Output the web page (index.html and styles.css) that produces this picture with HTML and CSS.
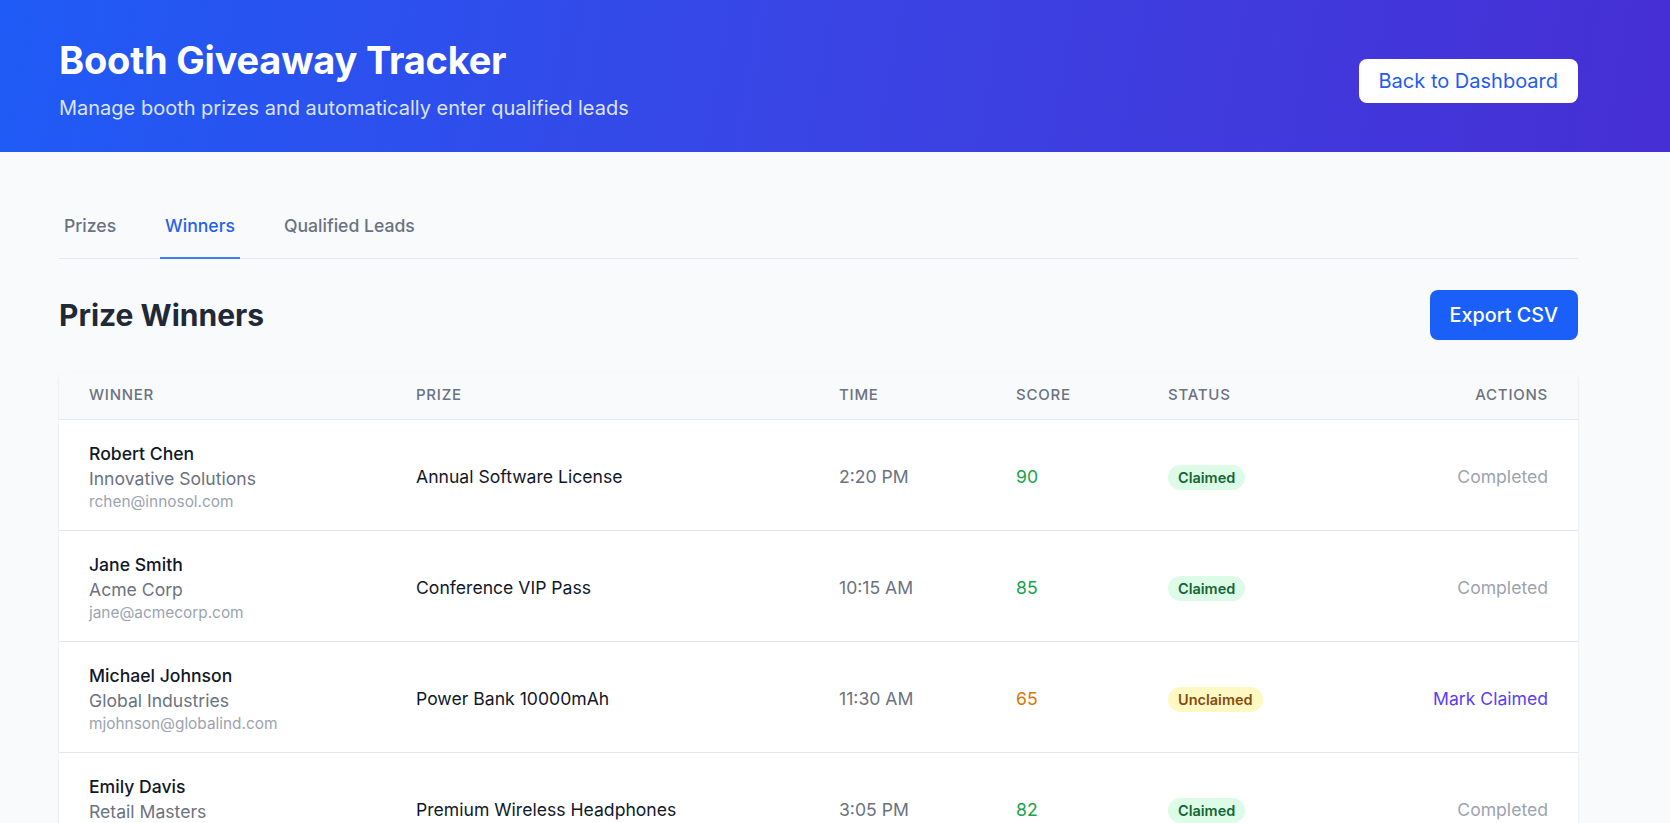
FILE: index.html
```html
<!DOCTYPE html>
<html lang="en">
<head>
<meta charset="utf-8">
<title>Booth Giveaway Tracker</title>
<link rel="stylesheet" href="styles.css">
</head>
<body>
<header class="hero">
  <div class="hero-text">
    <h1 class="hero-title">Booth Giveaway Tracker</h1>
    <p class="hero-sub">Manage booth prizes and automatically enter qualified leads</p>
  </div>
  <button class="btn-light">Back to Dashboard</button>
</header>
<main class="main">
  <nav class="tabs">
    <a class="tab">Prizes</a>
    <a class="tab active">Winners</a>
    <a class="tab">Qualified Leads</a>
  </nav>
  <div class="section-head">
    <h2 class="section-title">Prize Winners</h2>
    <button class="btn-primary">Export CSV</button>
  </div>
  <div class="card">
    <div class="grid head">
      <div class="cell">Winner</div>
      <div class="cell">Prize</div>
      <div class="cell">Time</div>
      <div class="cell">Score</div>
      <div class="cell">Status</div>
      <div class="cell right">Actions</div>
    </div>
    <div class="grid row">
      <div class="cell person"><span class="name">Robert Chen</span><span class="company">Innovative Solutions</span><span class="email">rchen@innosol.com</span></div>
      <div class="cell prize">Annual Software License</div>
      <div class="cell time">2:20 PM</div>
      <div class="cell score high">90</div>
      <div class="cell"><span class="badge claimed">Claimed</span></div>
      <div class="cell right done">Completed</div>
    </div>
    <div class="grid row">
      <div class="cell person"><span class="name">Jane Smith</span><span class="company">Acme Corp</span><span class="email">jane@acmecorp.com</span></div>
      <div class="cell prize">Conference VIP Pass</div>
      <div class="cell time">10:15 AM</div>
      <div class="cell score high">85</div>
      <div class="cell"><span class="badge claimed">Claimed</span></div>
      <div class="cell right done">Completed</div>
    </div>
    <div class="grid row">
      <div class="cell person"><span class="name">Michael Johnson</span><span class="company">Global Industries</span><span class="email">mjohnson@globalind.com</span></div>
      <div class="cell prize">Power Bank 10000mAh</div>
      <div class="cell time">11:30 AM</div>
      <div class="cell score mid">65</div>
      <div class="cell"><span class="badge unclaimed">Unclaimed</span></div>
      <div class="cell right"><a class="link">Mark Claimed</a></div>
    </div>
    <div class="grid row">
      <div class="cell person"><span class="name">Emily Davis</span><span class="company">Retail Masters</span><span class="email">emily@retailmasters.com</span></div>
      <div class="cell prize">Premium Wireless Headphones</div>
      <div class="cell time">3:05 PM</div>
      <div class="cell score high">82</div>
      <div class="cell"><span class="badge claimed">Claimed</span></div>
      <div class="cell right done">Completed</div>
    </div>
  </div>
</main>
</body>
</html>
```
FILE: styles.css
```css
* { box-sizing: border-box; }
html, body { margin: 0; }
body {
  background: #f9fafb;
  font-family: Inter, "Noto Sans", sans-serif;
  color: #111827;
}
.hero {
  display: flex;
  justify-content: space-between;
  align-items: center;
  padding: 37px 92px 30px 59px;
  background: linear-gradient(100deg, #1f5bf6 0%, #3a44e4 50%, #462fd4 100%);
  color: #fff;
}
.hero-title {
  margin: 0;
  font-size: 38px;
  line-height: 47px;
  font-weight: 700;
  letter-spacing: -0.2px;
}
.hero-sub {
  margin: 10px 0 0;
  font-size: 20px;
  line-height: 28px;
  color: #dbe4ff;
}
.btn-light {
  margin-top: 2px;
  height: 44px;
  padding: 0 20px;
  border: 0;
  border-radius: 8px;
  background: #fff;
  color: #1f5cf5;
  font-family: inherit;
  font-size: 20px;
  font-weight: 400;
}
.main {
  padding: 48px 92px 0 59px;
}
.tabs {
  display: flex;
  gap: 39px;
  border-bottom: 1px solid #e5e7eb;
}
.tab {
  padding: 12px 5px 18px;
  margin-bottom: -1px;
  font-size: 17.6px;
  line-height: 27px;
  font-weight: 500;
  color: #6b7280;
  border-bottom: 2px solid transparent;
}
.tab.active {
  color: #2563eb;
  border-bottom-color: #3b82f6;
}
.section-head {
  display: flex;
  justify-content: space-between;
  align-items: center;
  margin-top: 31px;
}
.section-title {
  margin: 0;
  font-size: 30px;
  line-height: 36px;
  font-weight: 700;
  color: #1f2937;
}
.btn-primary {
  height: 50px;
  padding: 0 20px;
  border: 0;
  border-radius: 8px;
  background: #1a5ff8;
  color: #fff;
  font-family: inherit;
  font-size: 19.8px;
  font-weight: 500;
}
.card {
  margin-top: 32px;
  background: #fff;
  border-radius: 8px;
  box-shadow: 0 1px 3px rgba(0,0,0,0.08), 0 1px 2px rgba(0,0,0,0.04);
  overflow: hidden;
}
.grid {
  display: grid;
  grid-template-columns: 327px 423px 177px 152px 1fr 240px;
  align-items: center;
}
.cell {
  padding: 0 30px;
}
.right { text-align: right; }
.head {
  height: 48px;
  padding-bottom: 3px;
  background: #f9fafb;
  border-bottom: 1px solid #e5e7eb;
  font-size: 15px;
  font-weight: 500;
  letter-spacing: 0.05em;
  text-transform: uppercase;
  color: #6b7280;
}
.row {
  padding: 21px 0 19px;
  border-bottom: 1px solid #e5e7eb;
  font-size: 17.6px;
}
.person { display: flex; flex-direction: column; }
.name { line-height: 25px; font-weight: 500; color: #111827; }
.company { line-height: 26px; color: #6b7280; }
.email { line-height: 19px; font-size: 15.4px; color: #9ca3af; }
.prize { color: #111827; }
.time { color: #6b7280; }
.score { font-weight: 400; }
.score.high { color: #16a34a; }
.score.mid { color: #d97706; }
.badge {
  display: inline-block;
  height: 25px;
  line-height: 25px;
  padding: 0 10px;
  margin-top: 2px;
  border-radius: 999px;
  font-size: 14.5px;
  font-weight: 600;
}
.claimed { background: #dcfce7; color: #166534; }
.unclaimed { background: #fef9c3; color: #854d0e; }
.done { color: #9ca3af; }
.link { color: #5b3df5; }
```
